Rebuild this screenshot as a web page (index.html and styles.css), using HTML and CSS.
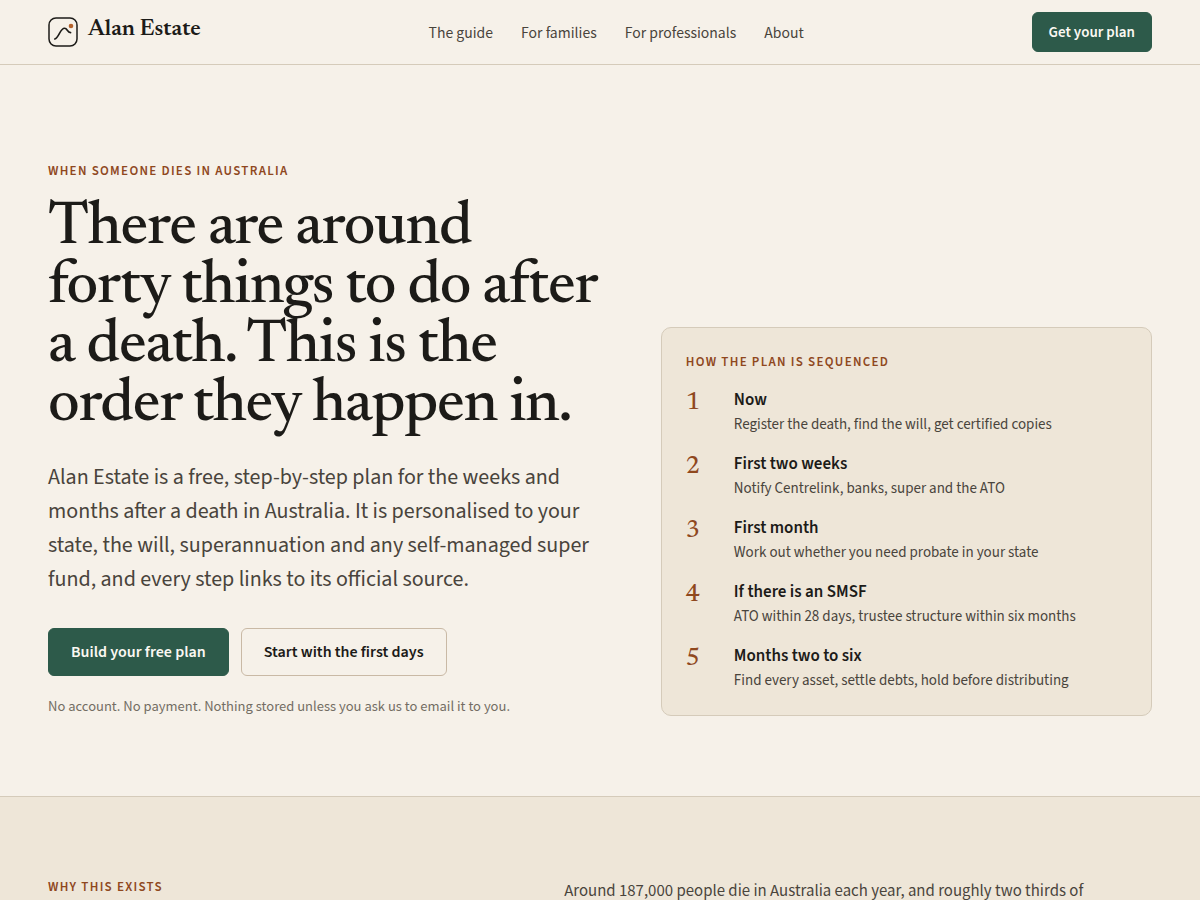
FILE: index.html
```html
<!DOCTYPE html>
<html lang="en-AU">
<head>
    <meta charset="UTF-8">
    <meta name="viewport" content="width=device-width, initial-scale=1.0">
    <title>Alan Estate</title>
    <link rel="stylesheet" href="styles.css">
</head>
<body>
    <header class="site-header">
        <a class="brand" href="#">
            <svg class="brand-mark" viewBox="0 0 30 30" fill="none" aria-hidden="true">
                <rect x="1" y="1" width="28" height="28" rx="7" stroke="#1c1b18" stroke-width="1.5"/>
                <path d="M6.8 22C11 21 12 11.3 16.6 11.3C19.6 11.3 19 15.4 22.6 15.6" stroke="#1c1b18" stroke-width="1.6" stroke-linecap="round"/>
                <circle cx="23" cy="9" r="2.3" fill="#b5622c"/>
            </svg>
            <span class="brand-name">Alan Estate</span>
        </a>
        <nav class="site-nav">
            <a href="#guide">The guide</a>
            <a href="#families">For families</a>
            <a href="#professionals">For professionals</a>
            <a href="#about">About</a>
        </nav>
        <button class="button button-small" type="button">Get your plan</button>
    </header>

    <main>
        <section class="hero">
            <div class="hero-text">
                <p class="eyebrow">When someone dies in Australia</p>
                <h1>There are around <br>forty things to do after <br>a death. This is the <br>order they happen in.</h1>
                <p class="lede">Alan Estate is a free, step-by-step plan for the weeks and months after a death in Australia. It is personalised to your state, the will, superannuation and any self-managed super fund, and every step links to its official source.</p>
                <div class="actions">
                    <button class="button" type="button">Build your free plan</button>
                    <button class="button button-outline" type="button">Start with the first days</button>
                </div>
                <p class="note">No account. No payment. Nothing stored unless you ask us to email it to you.</p>
            </div>

            <aside class="plan">
                <h2 class="eyebrow">How the plan is sequenced</h2>
                <ol class="steps">
                    <li>
                        <span class="step-number">1</span>
                        <div>
                            <h3>Now</h3>
                            <p>Register the death, find the will, get certified copies</p>
                        </div>
                    </li>
                    <li>
                        <span class="step-number">2</span>
                        <div>
                            <h3>First two weeks</h3>
                            <p>Notify Centrelink, banks, super and the ATO</p>
                        </div>
                    </li>
                    <li>
                        <span class="step-number">3</span>
                        <div>
                            <h3>First month</h3>
                            <p>Work out whether you need probate in your state</p>
                        </div>
                    </li>
                    <li>
                        <span class="step-number">4</span>
                        <div>
                            <h3>If there is an SMSF</h3>
                            <p>ATO within 28 days, trustee structure within six months</p>
                        </div>
                    </li>
                    <li>
                        <span class="step-number">5</span>
                        <div>
                            <h3>Months two to six</h3>
                            <p>Find every asset, settle debts, hold before distributing</p>
                        </div>
                    </li>
                </ol>
            </aside>
        </section>

        <section class="why">
            <h2 class="eyebrow">Why this exists</h2>
            <p>Around 187,000 people die in Australia each year, and roughly two thirds of</p>
        </section>
    </main>
</body>
</html>
```
FILE: styles.css
```css
:root {
    --paper: #f6f1e9;
    --sand: #eee6d8;
    --line: #d5cbba;
    --ink: #1c1b18;
    --text: #49443c;
    --muted: #736d63;
    --rust: #8f481e;
    --green: #2d5a4a;
    --serif: "Newsreader", "Liberation Serif", serif;
    --sans: "Source Sans 3", "Noto Sans CJK SC", "Noto Sans", sans-serif;
    --sans-wide: "Noto Sans CJK SC", "Noto Sans", sans-serif;
}

* {
    box-sizing: border-box;
}

body {
    margin: 0;
    background: var(--paper);
    color: var(--text);
    font-family: var(--sans);
    font-size: 16px;
    line-height: 26px;
}

h1, h2, h3, p {
    margin: 0;
}

a {
    color: inherit;
    text-decoration: none;
}

.site-header {
    display: flex;
    justify-content: space-between;
    align-items: center;
    padding: 12px 48px;
    border-bottom: 1px solid var(--line);
}

.brand {
    display: flex;
    gap: 10px;
    color: var(--ink);
}

.brand-mark {
    width: 30px;
    height: 30px;
}

.brand-name {
    font-family: var(--serif);
    font-size: 23px;
    font-weight: 600;
    font-variation-settings: "opsz" 72;
    line-height: 26px;
}

.site-nav {
    display: flex;
    gap: 28px;
    font-family: var(--sans-wide);
    font-size: 14px;
}

.button {
    height: 48px;
    padding: 0 22px;
    border: 1px solid var(--green);
    border-radius: 6px;
    background: var(--green);
    color: #fbf8f2;
    font-family: inherit;
    font-size: 16px;
    font-weight: 600;
    cursor: pointer;
}

.button-small {
    height: 40px;
    padding: 0 16px;
    font-size: 15px;
}

.button-outline {
    border-color: #c9b9a5;
    background: transparent;
    color: var(--ink);
}

.eyebrow {
    color: var(--rust);
    font-size: 13px;
    font-weight: 600;
    line-height: 20px;
    letter-spacing: 0.1em;
    text-transform: uppercase;
}

.hero {
    display: grid;
    grid-template-columns: minmax(0, 1.15fr) minmax(0, 1fr);
    gap: 48px;
    align-items: end;
    padding: 96px 48px 80px;
}

h1 {
    margin-top: 18px;
    color: var(--ink);
    font-family: var(--serif);
    font-size: 62px;
    font-weight: 500;
    font-variation-settings: "opsz" 72;
    line-height: 59px;
    letter-spacing: -0.02em;
    white-space: nowrap;
}

.lede {
    margin-top: 25px;
    font-size: 22px;
    line-height: 34px;
}

.actions {
    display: flex;
    gap: 12px;
    margin-top: 32px;
}

.note {
    margin-top: 20px;
    color: var(--muted);
    font-family: var(--sans-wide);
    font-size: 13px;
    line-height: 20px;
}

.plan {
    padding: 24px 24px 22px;
    border: 1px solid var(--line);
    border-radius: 10px;
    background: var(--sand);
}

.steps {
    display: grid;
    gap: 14px;
    margin: 15px 0 0;
    padding: 0;
    list-style: none;
}

.steps li {
    display: grid;
    grid-template-columns: 32px 1fr;
    gap: 16px;
}

.step-number {
    color: var(--rust);
    font-family: var(--serif);
    font-size: 25px;
    font-weight: 500;
    line-height: 34px;
}

.steps h3 {
    color: var(--ink);
    font-size: 17px;
    font-weight: 600;
    line-height: 26px;
}

.steps p {
    font-size: 15px;
    line-height: 24px;
}

.why {
    display: grid;
    grid-template-columns: 1fr 1.3fr;
    gap: 64px;
    padding: 80px 48px;
    border-top: 1px solid var(--line);
    background: var(--sand);
}

.why p {
    font-family: var(--sans-wide);
    font-size: 15px;
}
```
